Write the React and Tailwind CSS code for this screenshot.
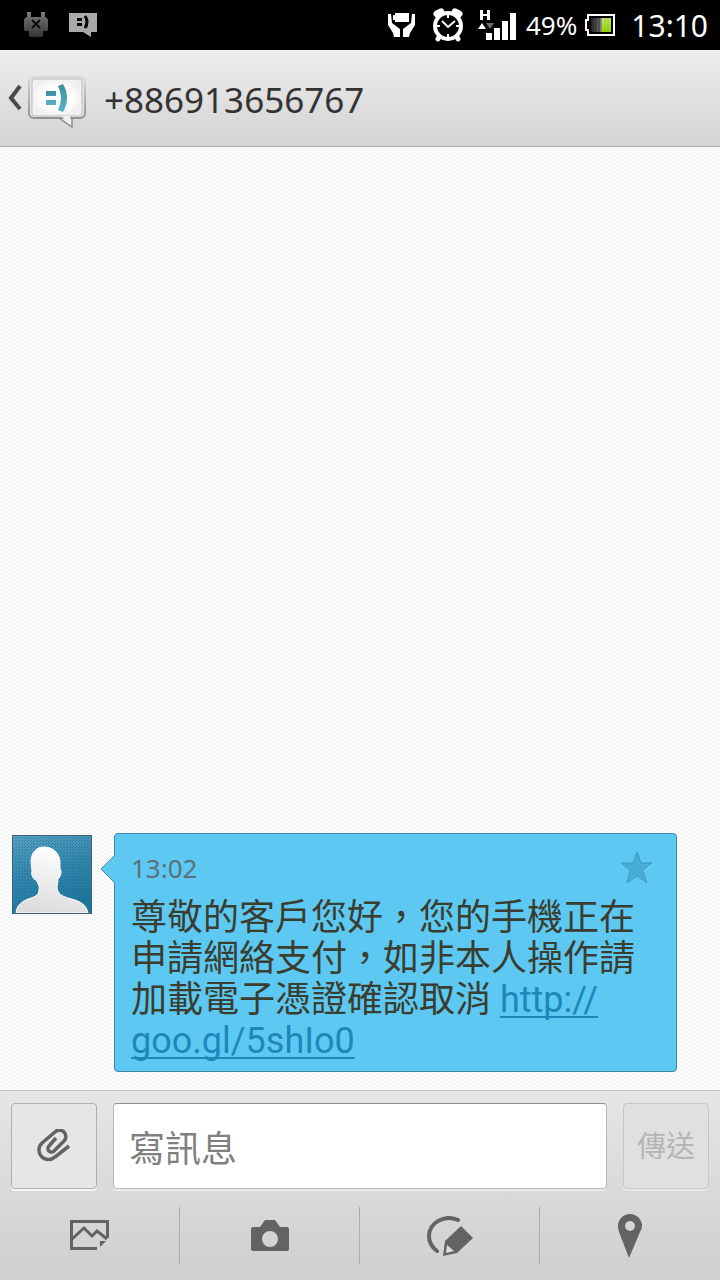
import React, { useState } from 'react';

const PHONE_NUMBER = '+886913656767';

const PlugIcon = () => (
    <svg width="24" height="26" viewBox="0 0 24 26" aria-hidden="true">
        <defs>
            <linearGradient id="plug" x1="0" y1="0" x2="0" y2="1">
                <stop offset="0" stopColor="#7c7c7c" />
                <stop offset="1" stopColor="#333333" />
            </linearGradient>
        </defs>
        <path d="M3 0h4v5h10V0h4v5q3 1 3 3v9q0 2-3 2h-2v6H5v-6H3q-3 0-3-2V8q0-2 3-3z" fill="url(#plug)" />
        <path d="M8 8l8 8M16 8l-8 8" stroke="#0b0b0b" strokeWidth="2" />
    </svg>
);

const MessageIcon = () => (
    <svg width="30" height="24" viewBox="0 0 30 24" aria-hidden="true">
        <path d="M1 0h28v19h-6v5l-8-5H1z" fill="#a9a9a9" />
        <path d="M9 5h5v3H9zM9 10h5v3H9z" fill="#050505" />
        <path d="M17 3q4 6 0 12" fill="none" stroke="#050505" strokeWidth="3" />
    </svg>
);

const PowerSaverIcon = () => (
    <svg width="28" height="24" viewBox="0 0 28 24" fill="#fff" aria-hidden="true">
        <path d="M5 2h2V0h14v9H7V7H5z" />
        <path d="M0 1h3l1 9 8 6v8H6l-1-4-5-8zM27 1h-3l-1 9-8 6v8h6l1-4 5-8z" />
    </svg>
);

const AlarmIcon = () => (
    <svg width="32" height="34" viewBox="0 0 32 34" aria-hidden="true">
        <path d="M5 6l4-2M23 4l4 2" stroke="#fff" strokeWidth="7" strokeLinecap="round" />
        <path d="M7 29l-1 2M25 29l1 2" stroke="#fff" strokeWidth="5" strokeLinecap="round" />
        <circle cx="16" cy="18" r="13" fill="#000" stroke="#fff" strokeWidth="4" />
        <path d="M16 7v3M16 26v3M5 18h3M24 18h3" stroke="#fff" strokeWidth="2" />
        <path d="M10 13l6 6 7-6" fill="none" stroke="#fff" strokeWidth="2" />
    </svg>
);

const SignalIcon = () => (
    <svg width="40" height="30" viewBox="0 0 40 30" fill="#fff" aria-label="H">
        <path d="M2 0h3v4h4V0h3v10H9V6H5v4H2z" />
        <path d="M0 19l4-6 4 6z" />
        <path d="M8 13h8l-4 6z" fill="#6b6b6b" />
        <path d="M8 23h6v7H8zM16 18h6v12h-6zM24 11h6v19h-6zM32 3h6v27h-6z" />
    </svg>
);

const BatteryIcon = () => (
    <svg width="30" height="22" viewBox="0 0 30 22" aria-hidden="true">
        <defs>
            <linearGradient id="charge" x1="0" y1="0" x2="1" y2="0">
                <stop offset="0" stopColor="#1a1a1a" />
                <stop offset="1" stopColor="#8a8a8a" />
            </linearGradient>
            <linearGradient id="level" x1="0" y1="0" x2="0" y2="1">
                <stop offset="0" stopColor="#c8e878" />
                <stop offset="1" stopColor="#8fd400" />
            </linearGradient>
        </defs>
        <path d="M3 1h26v20H3v-5H1V6h2z" fill="none" stroke="#fff" strokeWidth="2" />
        <path d="M6 4h11v14H6z" fill="url(#charge)" />
        <path d="M17 4h9v14h-9z" fill="url(#level)" />
        <path d="M8 4v14M11 4v14M14 4v14" stroke="#333" />
        <path d="M20 4v14M23 4v14" stroke="#86c800" />
    </svg>
);

const AppLogo = () => (
    <svg width="80" height="56" viewBox="0 0 80 56" aria-hidden="true">
        <defs>
            <linearGradient id="rim" x1="0" y1="0" x2="0" y2="1">
                <stop offset="0" stopColor="#d9d9d9" />
                <stop offset="1" stopColor="#929292" />
            </linearGradient>
            <radialGradient id="face">
                <stop offset="0.6" stopColor="#ffffff" />
                <stop offset="1" stopColor="#f0f0f0" />
            </radialGradient>
            <linearGradient id="smile" x1="0" y1="0" x2="0" y2="1">
                <stop offset="0" stopColor="#3f8e9c" />
                <stop offset="1" stopColor="#57b4c6" />
            </linearGradient>
        </defs>
        <path d="M12 14L3 26l9 11" fill="none" stroke="#4a4a4a" strokeWidth="4" />
        <path d="M51 46h13v9z" fill="#ededed" stroke="#8d8d8d" strokeWidth="1.5" />
        <rect x="21" y="5" width="56" height="41" rx="5" fill="#e4e4e4" stroke="url(#rim)" strokeWidth="2" />
        <rect x="24" y="7" width="50" height="37" rx="3" fill="url(#face)" stroke="#bdbdbd" />
        <path d="M53 44h9l1 9z" fill="#f2f2f2" />
        <path d="M38 19h10v5H38zM38 28h10v5H38z" fill="url(#smile)" />
        <path d="M50 14l5-2q8 14 0 28l-5-2q6-12 0-24z" fill="url(#smile)" />
    </svg>
);

const Avatar = () => (
    <svg width="80" height="79" viewBox="0 0 80 79" className="shrink-0" role="img" aria-label={PHONE_NUMBER}>
        <defs>
            <linearGradient id="sky" x1="0" y1="0" x2="0.3" y2="1">
                <stop offset="0" stopColor="#57a3c4" />
                <stop offset="0.5" stopColor="#3488af" />
                <stop offset="1" stopColor="#1f789f" />
            </linearGradient>
            <linearGradient id="person" x1="0.6" y1="0" x2="0.4" y2="1">
                <stop offset="0" stopColor="#ffffff" />
                <stop offset="1" stopColor="#dcdcdc" />
            </linearGradient>
            <pattern id="weave" width="3" height="3" patternUnits="userSpaceOnUse">
                <path d="M0 0h1v1H0zM1 2h1v1H1z" fill="#0b4f70" opacity="0.35" />
            </pattern>
        </defs>
        <rect x="0.5" y="0.5" width="79" height="78" fill="url(#sky)" />
        <rect width="80" height="79" fill="url(#weave)" />
        <path
            d="M4 78c1-8 5-11 12-14 7-2 11-4 11-9 1-3-1-7-3-10-3-1-5-5-4-9l-1-9c0-9 5-15 13-15 9 0 15 6 16 14v8c2 1 1 8-2 10 0 4-1 6-1 9 1 6 5 8 11 10 12 3 18 6 20 15z"
            fill="url(#person)"
            stroke="#fff"
        />
        <rect x="0.5" y="0.5" width="79" height="78" fill="none" stroke="#3f6272" />
    </svg>
);

const StarIcon = () => (
    <svg width="34" height="34" viewBox="0 0 34 34" aria-hidden="true">
        <path d="M17 2l4 11h12l-9 8 4 12-11-7-11 7 4-12-9-8h12z" fill="#83d9f6" />
        <path d="M17 1l4 11h11l-9 8 4 12-10-7-10 7 3-12-9-8h12z" fill="#48aed7" stroke="#3d98c4" />
    </svg>
);

const ClipIcon = () => (
    <svg width="34" height="34" viewBox="7 9 34 34" fill="none" stroke="#636363" strokeWidth="3.5" aria-hidden="true">
        <path d="M26 18l-7 8a3 3 0 0 0 5 5l10-10a6 6 0 0 0-9-9L12 23a9 9 0 0 0 13 14l14-11" />
    </svg>
);

const GalleryIcon = () => (
    <svg width="40" height="32" viewBox="0 0 40 32" aria-hidden="true">
        <path d="M37.5 18V1.5h-36v27H27M1 20L14 8l8 8 5-5 10 8" fill="none" stroke="#636363" strokeWidth="3" />
        <path d="M30 21h6l-6 6z" fill="#636363" />
    </svg>
);

const CameraIcon = () => (
    <svg width="38" height="32" viewBox="0 0 38 32" aria-hidden="true">
        <path d="M2 7h7l5-7h10l5 7h7q2 0 2 2v20q0 2-2 2H2q-2 0-2-2V9q0-2 2-2zM19 11a8 8 0 1 0 0 16 8 8 0 1 0 0-16z" fill="#636363" fillRule="evenodd" />
    </svg>
);

const SketchIcon = () => (
    <svg width="46" height="40" viewBox="0 0 46 40" aria-hidden="true">
        <path d="M31 4C17-2 2 7 2 20q0 9 8 15" fill="none" stroke="#636363" strokeWidth="4" strokeLinecap="round" />
        <path d="M34 10l12 12-16 15-14 3 2-15z" fill="#636363" />
        <path d="M20 29l7 6-8 2z" fill="#dcdcdc" />
    </svg>
);

const PinIcon = () => (
    <svg width="24" height="44" viewBox="0 0 24 44" aria-hidden="true">
        <path d="M12 0a12 12 0 0 1 12 12q0 3-2 6L11 44 1 18q-1-3-1-6A12 12 0 0 1 12 0zM12 7a5 5 0 1 0 0 10 5 5 0 1 0 0-10z" fill="#636363" fillRule="evenodd" />
    </svg>
);

const tools = [
    { label: 'Gallery', Icon: GalleryIcon },
    { label: 'Camera', Icon: CameraIcon },
    { label: 'Sketch', Icon: SketchIcon },
    { label: 'Location', Icon: PinIcon },
];

function StatusBar() {
    return (
        <div className="flex h-[50px] items-center justify-between bg-black pl-6 pr-3 text-white">
            <div className="flex items-center gap-5">
                <PlugIcon />
                <MessageIcon />
            </div>
            <div className="flex items-center">
                <PowerSaverIcon />
                <span className="ml-4"><AlarmIcon /></span>
                <span className="ml-3.5"><SignalIcon /></span>
                <span className="ml-2 text-[26px]">49%</span>
                <span className="ml-2"><BatteryIcon /></span>
                <span className="ml-4 text-[30px]">13:10</span>
            </div>
        </div>
    );
}

function Header() {
    return (
        <header className="flex h-[97px] items-center gap-4 border-b border-[#a9a9a9] bg-linear-to-b from-[#eeeeee] to-[#d3d3d3] pl-2 pt-1 shadow-sm">
            <button type="button" aria-label="Back">
                <AppLogo />
            </button>
            <h1 className="text-[35px] text-[#333333]">{PHONE_NUMBER}</h1>
        </header>
    );
}

function Message() {
    return (
        <article className="flex items-start pl-3 pr-[43px]">
            <div className="mt-0.5">
                <Avatar />
            </div>
            <div className="relative ml-[22px] flex-1 rounded border border-[#3f87a5] bg-[#5dc9f2] px-4 pb-[9px] pt-4">
                <svg width="15" height="30" viewBox="0 0 15 30" className="absolute -left-[15px] top-5" aria-hidden="true">
                    <path d="M15 1L1 15l14 14" fill="#5dc9f2" stroke="#3f87a5" />
                </svg>
                <div className="flex h-9 items-center justify-between pr-[6px]">
                    <time className="text-[26px] text-[#5b7078]">13:02</time>
                    <button type="button" aria-label="Star">
                        <StarIcon />
                    </button>
                </div>
                <p className="mt-3 font-['Roboto','Noto_Sans_CJK_TC',sans-serif] text-[36px] leading-[41px] text-[#3a3d30]">
                    尊敬的客戶您好，您的手機正在申請網絡支付，如非本人操作請加載電子憑證確認取消{' '}
                    <a
                        href="http://goo.gl/5shIo0"
                        className="text-[#1c87b8] underline decoration-2 underline-offset-4 [text-decoration-skip-ink:none]"
                    >
                        http://<wbr />goo.gl/5shIo0
                    </a>
                </p>
            </div>
        </article>
    );
}

function Composer() {
    const [text, setText] = useState('');

    return (
        <footer className="border-t border-[#bdbdbd] bg-linear-to-b from-[#e6e6e6] via-[#dadada] to-[#cfcfcf]">
            <form className="flex gap-4 px-[11px] pt-3" onSubmit={(e) => e.preventDefault()}>
                <button
                    type="button"
                    aria-label="Attach"
                    className="flex size-[86px] shrink-0 items-center justify-center rounded border border-[#b0b0b0] bg-[#e6e6e6] shadow-[0_2px_0_#f4f4f4]"
                >
                    <ClipIcon />
                </button>
                <input
                    type="text"
                    aria-label="寫訊息"
                    placeholder="寫訊息"
                    value={text}
                    onChange={(e) => setText(e.target.value)}
                    className="h-[86px] min-w-0 flex-1 rounded border border-[#b8b8b8] border-t-[#8f8f8f] bg-white px-[15px] pt-1 text-[36px] text-[#333333] shadow-[0_2px_0_#ececec] outline-none placeholder:text-[#808080]"
                />
                <button
                    type="submit"
                    disabled={!text}
                    className="size-[86px] shrink-0 rounded border border-[#c6c6c6] bg-[#e0e0e0] text-[29px] text-[#b5b5b5] shadow-[0_2px_0_#e6e6e6]"
                >
                    傳送
                </button>
            </form>
            <nav className="grid grid-cols-4 divide-x divide-[#adadad] pb-4 pt-[18px]">
                {tools.map(({ label, Icon }) => (
                    <button key={label} type="button" aria-label={label} className="flex h-[57px] items-center justify-center">
                        <Icon />
                    </button>
                ))}
            </nav>
        </footer>
    );
}

export default function App() {
    return (
        <div lang="zh-TW" className="flex min-h-screen flex-col font-['Noto_Sans','Noto_Sans_CJK_TC',sans-serif]">
            <StatusBar />
            <Header />
            <main className="flex flex-1 flex-col justify-end bg-[#fdfdfd] bg-[conic-gradient(#f5f5f5_25%,transparent_0_50%,#f5f5f5_0_75%,transparent_0)] bg-size-[4px_4px] pb-[18px]">
                <Message />
            </main>
            <Composer />
        </div>
    );
}
